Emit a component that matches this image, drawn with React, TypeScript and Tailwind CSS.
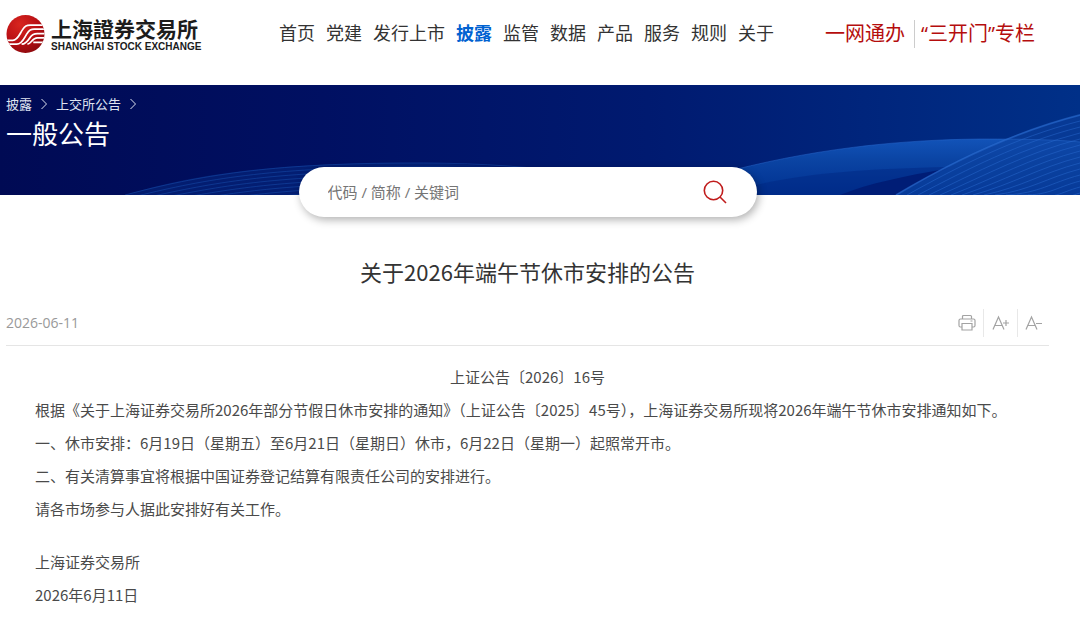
import { useState } from "react";
import type { ReactNode } from "react";

const navItems = [
  "首页",
  "党建",
  "发行上市",
  "披露",
  "监管",
  "数据",
  "产品",
  "服务",
  "规则",
  "关于",
];

const paragraphs = [
  "根据《关于上海证券交易所2026年部分节假日休市安排的通知》（上证公告〔2025〕45号），上海证券交易所现将2026年端午节休市安排通知如下。",
  "一、休市安排：6月19日（星期五）至6月21日（星期日）休市，6月22日（星期一）起照常开市。",
  "二、有关清算事宜将根据中国证券登记结算有限责任公司的安排进行。",
  "请各市场参与人据此安排好有关工作。",
];

const Logo = () => (
  <a href="#" className="flex items-center gap-[6px] text-[#1c1c1c]">
    <svg viewBox="0 0 40 40" className="h-10 w-[39px]">
      <defs>
        <radialGradient id="ball" cx="0.35" cy="0.25" r="0.8">
          <stop offset="0" stopColor="#d8261f" />
          <stop offset="0.6" stopColor="#b80f14" />
          <stop offset="1" stopColor="#8e0a0e" />
        </radialGradient>
        <clipPath id="ballClip">
          <circle cx="20" cy="20" r="19.5" />
        </clipPath>
      </defs>
      <circle cx="20" cy="20" r="19.5" fill="url(#ball)" />
      <g clipPath="url(#ballClip)" fill="none" stroke="#fff" strokeWidth="1.8">
        <path d="M0 26.500H7C12 26.500 14 20 17 15.500C19.500 11.500 21 11 25 11H40" />
        <path d="M0 30.500H11C17 30.500 19 23 22 19C24 15.500 26 15 29 15H40" />
        <path d="M16 30.500C21 30 23 26 25 23C27 20 29 19.500 32 19.500H40" />
        <path d="M22 30.500C26 30 27 24 32 24H40M28 28.500H40" />
      </g>
    </svg>
    <span className="flex flex-col">
      <span className="font-['Noto_Sans_CJK_TC',sans-serif] text-[21px] leading-[26px] font-bold">
        上海證券交易所
      </span>
      <span className="font-['Liberation_Sans',sans-serif] text-[10px] leading-3 font-bold">
        SHANGHAI STOCK EXCHANGE
      </span>
    </span>
  </a>
);

const Waves = () => {
  const lines = Array.from({ length: 14 }, (_, i) => i);
  return (
    <svg
      viewBox="0 0 1080 110"
      preserveAspectRatio="none"
      className="absolute inset-0 h-full w-full"
      aria-hidden="true"
    >
      <defs>
        <linearGradient id="sky" x1="0" y1="0" x2="1" y2="0">
          <stop offset="0" stopColor="#000a54" />
          <stop offset="0.3" stopColor="#001062" />
          <stop offset="0.6" stopColor="#001a70" />
          <stop offset="1" stopColor="#003088" />
        </linearGradient>
        <linearGradient id="band" x1="0" y1="0" x2="0" y2="1">
          <stop offset="0" stopColor="#1253b8" />
          <stop offset="0.4" stopColor="#0a43a2" />
          <stop offset="1" stopColor="#003090" />
        </linearGradient>
      </defs>
      <rect width="1080" height="110" fill="url(#sky)" />
      <path
        d="M125 110C190 90 270 78 400 78C500 78 600 90 700 110Z"
        fill="#07308a"
        fillOpacity="0.45"
      />
      <g fill="none" stroke="#1c58b8" strokeWidth="0.8" strokeOpacity="0.55">
        {lines.slice(0, 9).map((i) => (
          <path
            key={i}
            d={`M${125 + i * 12} ${110 + i}C${200 + i * 6} ${90 + i * 4} 270 ${79 + i * 4} 400 ${78 + i * 4}S600 ${90 + i * 3} 700 110`}
          />
        ))}
      </g>
      <path
        d="M700 94C790 68 880 55 980 54C1030 54 1060 55 1080 57V110H700Z"
        fill="url(#band)"
      />
      <path
        d="M740 104C800 88 860 84 950 82L896 110H740Z"
        fill="#002580"
        fillOpacity="0.45"
      />
      <path d="M840 110C870 98 905 91 945 84L896 110Z" fill="#001d76" />
      <path
        d="M896 110C950 78 1010 48 1080 30V110Z"
        fill="#0b419e"
        fillOpacity="0.6"
      />
      <g fill="none" stroke="#2a6bd0" strokeWidth="0.8" strokeOpacity="0.6">
        {lines.map((i) => (
          <path
            key={i}
            d={`M${896 + i * 11} 110C${950 + i * 9} ${78 + i * 3} ${1010 + i * 4} ${48 + i * 5} 1080 ${30 + i * 6}`}
          />
        ))}
        <path d="M700 94C790 68 880 55 980 54C1030 54 1060 55 1080 57" />
        <path
          d="M896 110C950 78 1010 48 1080 30"
          strokeWidth="2"
          strokeOpacity="0.5"
        />
      </g>
    </svg>
  );
};

const Chevron = () => (
  <svg
    viewBox="0 0 8 12"
    className="h-3 w-2"
    fill="none"
    stroke="currentColor"
    aria-hidden="true"
  >
    <path d="M1.500 1L6.500 6L1.500 11" />
  </svg>
);

const ToolButton = ({
  label,
  onClick,
  children,
}: {
  label: string;
  onClick: () => void;
  children: ReactNode;
}) => (
  <button
    aria-label={label}
    onClick={onClick}
    className="flex h-7 w-[34px] items-center justify-center text-[#a3a3a3] last:w-[31px]"
  >
    <svg
      viewBox="0 0 18 18"
      className="size-[18px]"
      fill="none"
      stroke="currentColor"
      strokeWidth="1.200"
    >
      {children}
    </svg>
  </button>
);

const App = () => {
  const [keyword, setKeyword] = useState("");
  const [large, setLarge] = useState(false);

  return (
    <div className="bg-white font-['Open_Sans','Noto_Sans_CJK_SC',sans-serif] text-[#333]">
      <header className="flex h-[85px] items-start pr-[45px] pl-[6px]">
        <div className="mt-[14px] w-[273px] shrink-0">
          <Logo />
        </div>
        <nav className="mt-[19px] flex gap-[11px] text-lg leading-7 whitespace-nowrap">
          {navItems.map((item) => (
            <a
              key={item}
              href="#"
              className={item === "披露" ? "font-bold text-[#0062d1]" : ""}
            >
              {item}
            </a>
          ))}
        </nav>
        <div className="mt-5 ml-auto flex text-xl leading-7 whitespace-nowrap text-[#b50d0d]">
          <a href="#" className="pr-[9px]">
            一网通办
          </a>
          <a href="#" className="border-l border-[#ccc] pl-[6px]">
            “三开门”专栏
          </a>
        </div>
      </header>

      <section className="relative h-[110px] text-white">
        <Waves />
        <div className="relative pt-[9px] pl-[6px]">
          <div className="flex items-center gap-2 text-[13px] leading-5 text-[#dfe3f0]">
            <a href="#">披露</a>
            <Chevron />
            <a href="#">上交所公告</a>
            <Chevron />
          </div>
          <h1 className="text-[26px] leading-10">一般公告</h1>
        </div>
      </section>

      <main className="pr-[31px] pl-[6px]">
        <form
          onSubmit={(e) => e.preventDefault()}
          className="relative mx-auto -mt-7 flex h-[50px] w-[458px] items-center rounded-full bg-white pr-[30px] pl-[29px] shadow-[2px_3px_8px_rgba(0,0,0,0.3)]"
        >
          <input
            type="text"
            aria-label="搜索"
            placeholder="代码 / 简称 / 关键词"
            value={keyword}
            onChange={(e) => setKeyword(e.target.value)}
            className="min-w-0 flex-1 text-[15px] outline-0 placeholder:text-[#757575]"
          />
          <button aria-label="搜索" className="text-[#c01c1c]">
            <svg
              viewBox="0 0 24 24"
              className="size-6"
              fill="none"
              stroke="currentColor"
              strokeWidth="1.600"
            >
              <circle cx="10.500" cy="10.500" r="9.200" />
              <path d="M17 17L23 23" />
            </svg>
          </button>
        </form>

        <h2 className="mt-[34px] text-center font-['Noto_Sans_CJK_SC',sans-serif] text-[22px] leading-10">
          关于2026年端午节休市安排的公告
        </h2>

        <div className="mt-[18px] flex items-center justify-between border-b border-[#e5e5e5] pb-2">
          <time className="text-sm leading-7 text-[#999]">2026-06-11</time>
          <div className="flex divide-x divide-[#e8e8e8]">
            <ToolButton label="打印" onClick={() => window.print()}>
              <path d="M4.500 5V2.500Q4.500 1.500 5.500 1.500H12.500Q13.500 1.500 13.500 2.500V5M4 13H2.500Q1 13 1 11.500V6.500Q1 5 2.500 5H15.500Q17 5 17 6.500V11.500Q17 13 15.500 13H14M4 9.500H14V16H4ZM12.500 7H14.500" />
            </ToolButton>
            <ToolButton label="放大字体" onClick={() => setLarge(true)}>
              <path d="M1 15.500L6.500 3L12 15.500M3 11.500H10M11 9H17M14 6V12" />
            </ToolButton>
            <ToolButton label="缩小字体" onClick={() => setLarge(false)}>
              <path d="M1 15.500L6.500 3L12 15.500M3 11.500H10M11 9.500H17" />
            </ToolButton>
          </div>
        </div>

        <article
          className={`pt-[14px] pl-[29px] font-['Noto_Sans_CJK_SC',sans-serif] leading-[33px] text-[#4a4a4a] ${large ? "text-lg" : "text-[15px]"}`}
        >
          <p className="pr-[29px] text-center">上证公告〔2026〕16号</p>
          {paragraphs.map((text) => (
            <p key={text}>{text}</p>
          ))}
          <footer className="mt-5">
            <p>上海证券交易所</p>
            <p>2026年6月11日</p>
          </footer>
        </article>
      </main>
    </div>
  );
};

export default App;
